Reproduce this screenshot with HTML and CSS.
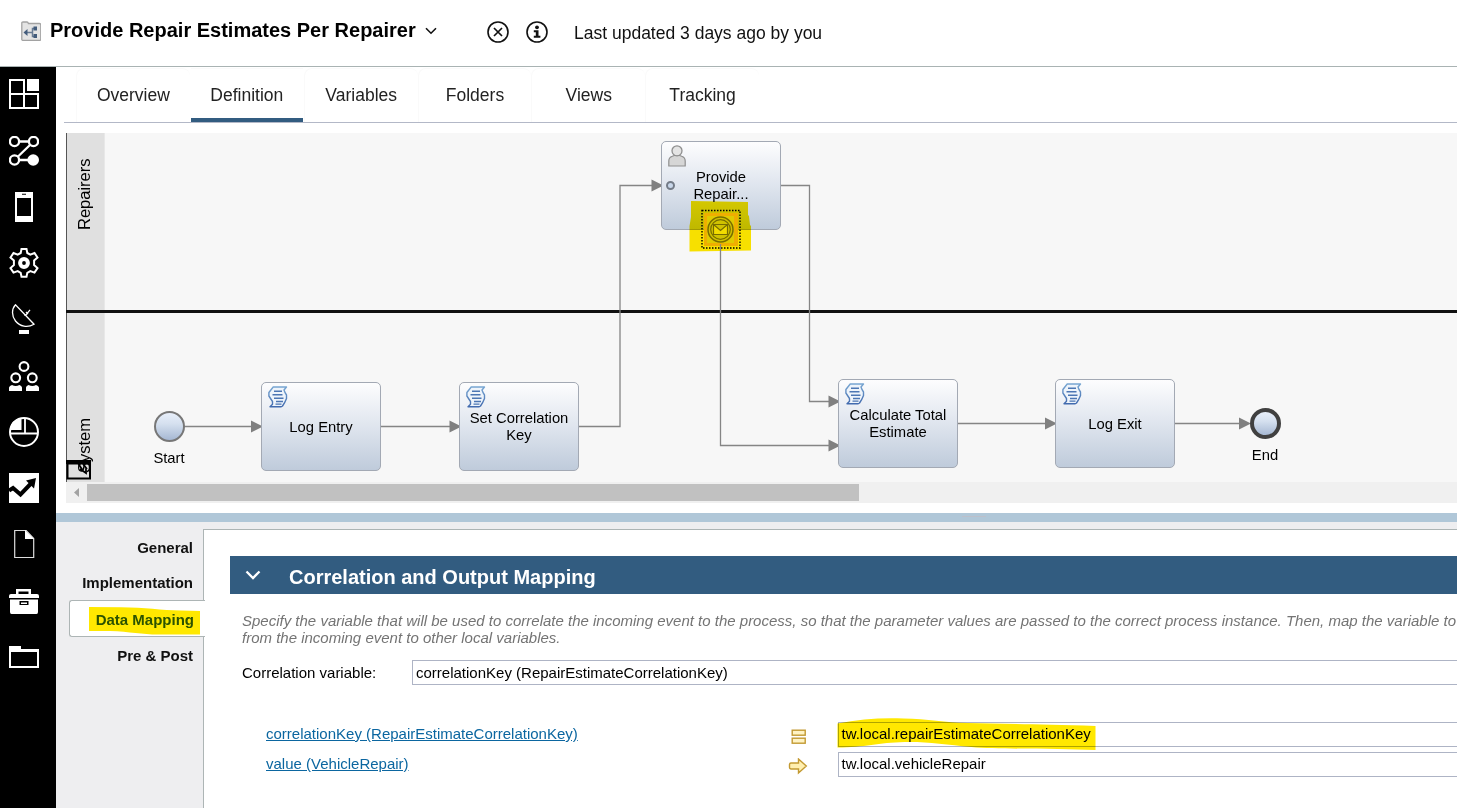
FILE: index.html
```html
<!DOCTYPE html>
<html lang="en">
<head>
<meta charset="utf-8">
<title>Provide Repair Estimates Per Repairer</title>
<link rel="stylesheet" href="styles.css">
</head>
<body>
<header class="topbar">
  <svg class="proc-icon" width="20" height="20" viewBox="0 0 20 20"><path d="M.8 2.200q0-1.200 1.200-1.200h4q1 0 1.400 1.500h11q1.400 0 1.400 1.300v14.400q0 1.200-1.200 1.200H2q-1.200 0-1.200-1.200z" fill="#e4e4e4" stroke="#a2a2a2" stroke-width="1.300"/><path d="M6 11.500h6M15 7.500h-3.500v8H15" fill="none" stroke="#687b94" stroke-width="1.500"/><path d="M2.500 11.500L6.500 8v7z" fill="#435c7c"/><rect x="12.500" y="5.500" width="3.500" height="4" fill="#435c7c"/><rect x="12.500" y="13" width="3.500" height="4" fill="#435c7c"/></svg>
  <h1 class="title">Provide Repair Estimates Per Repairer</h1>
  <svg class="chev" width="12" height="8" viewBox="0 0 12 8"><path d="M1 1.200l5 5 5-5" fill="none" stroke="#111" stroke-width="1.600"/></svg>
  <svg class="ico-close" width="22" height="22" viewBox="0 0 22 22" fill="none" stroke="#111"><circle cx="11" cy="11" r="10" stroke-width="1.600"/><path d="M7 7l8 8M15 7l-8 8" stroke-width="1.700"/></svg>
  <svg class="ico-info" width="22" height="22" viewBox="0 0 22 22"><circle cx="11" cy="11" r="10" fill="none" stroke="#111" stroke-width="1.600"/><circle cx="11" cy="6.300" r="1.900" fill="#111"/><path d="M7.800 9.200h4.700v5.500h1.900v2H7.800v-2h2v-3.500h-2z" fill="#111"/></svg>
  <span class="updated">Last updated 3 days ago by you</span>
</header>
<div class="body">
  <nav class="rail">
    <svg viewBox="0 0 30 30"><g fill="none" stroke="#fff" stroke-width="2"><path d="M1 1h14v28H1zM1 15h28v14H1z"/></g><rect x="18" y="0" width="12" height="12" fill="#fff"/></svg>
    <svg viewBox="0 0 30 30"><g fill="none" stroke="#fff" stroke-width="2.300"><circle cx="5.500" cy="5.500" r="4.600"/><circle cx="24.500" cy="5.500" r="4.600"/><circle cx="5.500" cy="24" r="4.600"/><path d="M10 5.500h10M21.500 8.500L8.500 21M10 24h12"/></g><circle cx="24.200" cy="24" r="5.800" fill="#fff"/></svg>
    <svg viewBox="0 0 30 30"><path fill="#fff" fill-rule="evenodd" d="M6 0h18v30H6zM8 6v18h14V6zM13 2.700h4v-1h-4z"/></svg>
    <svg viewBox="0 0 30 30"><path d="M12.500 1h5l.8 4 3 1.600 4.200-1.600 3 4.500-3.400 3v4.600l3.400 3-3 4.500-4.200-1.500-3 1.700-.8 4h-5l-.8-4-3-1.700-4.200 1.500-3-4.500 3.400-3v-4.600l-3.400-3L4.500 5l4.200 1.600 3-1.600z" fill="none" stroke="#fff" stroke-width="2"/><circle cx="15" cy="15" r="3.900" fill="none" stroke="#fff" stroke-width="4"/></svg>
    <svg viewBox="0 0 30 30"><path d="M6.500.8C2.500 5 2.500 12 6.500 17c4.500 5.500 12 7 18.500 3.200z" fill="none" stroke="#fff" stroke-width="1.300"/><path d="M15 10.800h2l4-5M17 8l2 2" stroke="#fff" stroke-width="1.300" fill="none"/><rect x="10" y="26" width="10" height="4" fill="#fff"/></svg>
    <svg viewBox="0 0 30 30"><g fill="none" stroke="#fff" stroke-width="2.100"><circle cx="15" cy="5.500" r="4.400"/><circle cx="6.700" cy="16.800" r="4.400"/><circle cx="23.300" cy="16.800" r="4.400"/></g><path fill="#fff" d="M0 30v-3.500q.5-2 3-2.500 3.700 2 7.400 0 2.300.5 2.600 2.500V30zM17 30v-3.500q.3-2 2.600-2.500 3.700 2 7.400 0 2.500.5 3 2.500V30z"/></svg>
    <svg viewBox="0 0 30 30"><circle cx="15" cy="15" r="14" fill="none" stroke="#fff" stroke-width="2"/><path d="M12.500 13H1Q2 2 12.500 1z" fill="#fff"/><path d="M1 16.500h28M16 16.500V1" stroke="#fff" stroke-width="1.800"/></svg>
    <svg viewBox="0 0 30 30"><path fill="#fff" d="M0 0h30v30H0z"/><path d="M0 17.500l4-2.500 7.500 6.500L22 10.500" fill="none" stroke="#000" stroke-width="4"/><path d="M17 7.500L27 5l-2 10.500z"/></svg>
    <svg viewBox="0 0 30 30"><path d="M5.700 1.500h11.500l7.500 8v19h-19z" fill="none" stroke="#ddd" stroke-width="1.200"/><path d="M16 1l9 9h-9z" fill="#fff"/></svg>
    <svg viewBox="0 0 30 30"><path fill="#fff" fill-rule="evenodd" d="M7 3h15v5h6q2 0 2 2v2H0v-2q0-2 2-2h5zM9.500 5.500V8h10V5.500zM1 13.500h28V26q0 2-1.500 2h-25Q1 28 1 26zM10.500 15v4h9v-4zM12 16.500h6V18h-6z"/></svg>
    <svg viewBox="0 0 30 30"><path fill="#fff" fill-rule="evenodd" d="M0 4h12v3h18v19H0zM2 10v14h26V10z"/></svg>
  </nav>
  <main class="main">
    <div class="tabs">
      <div class="tab">Overview</div><div class="tab active">Definition</div><div class="tab">Variables</div><div class="tab">Folders</div><div class="tab">Views</div><div class="tab">Tracking</div>
    </div>
    <section class="diagram">
      <div class="lane lane-top"><div class="lane-head"><span>Repairers</span></div></div>
      <div class="lane lane-bottom"><div class="lane-head"><span>System</span></div></div>
      <svg class="wires" width="1391" height="349" viewBox="66 133 1391 349">
        <g fill="none" stroke="#858585" stroke-width="1.300"><path d="M184 426.500h70M380 426.500h72M578 426.500h42V185.500H652M781 185.500h28.500V401.500H830M957 423.500h90M1175 423.500h68"/></g>
        <g fill="#808080"><path d="M251 420.500l12 6-12 6zM449.500 420.500l12 6-12 6zM651.500 179.500l12 6-12 6zM828.500 395.500l12 6-12 6zM828.500 439.500l12 6-12 6zM1045 417.500l12 6-12 6zM1239 417.500l12 6-12 6z"/></g>
      </svg>
      <div class="node n-provide">
        <svg class="user" width="18" height="22" viewBox="0 0 18 22"><path d="M.8 21v-5q0-3.500 3.500-4.700l2-.8h5.400l2 .8q3.500 1.200 3.500 4.700v5z" fill="#d6d6d6" stroke="#8f8f8f" stroke-width="1.200"/><circle cx="9" cy="5.800" r="5" fill="#e4e4e4" stroke="#8f8f8f" stroke-width="1.300"/></svg>
        <i class="port"></i><span>Provide<br>Repair...</span>
      </div>
      <div class="node n-log"><svg class="scroll"><use href="#scroll"/></svg><span>Log Entry</span></div>
      <div class="node n-set"><svg class="scroll"><use href="#scroll"/></svg><span>Set Correlation<br>Key</span></div>
      <div class="node n-calc"><svg class="scroll"><use href="#scroll"/></svg><span>Calculate Total<br>Estimate</span></div>
      <div class="node n-exit"><svg class="scroll"><use href="#scroll"/></svg><span>Log Exit</span></div>
      <div class="event start"><i></i><span>Start</span></div>
      <div class="event end"><i></i><span>End</span></div>
      <svg class="boundary" width="66" height="260" viewBox="688 200 66 260">
        <rect x="704" y="213" width="34" height="33" fill="#efbf35"/><rect x="707" y="216" width="27" height="27" fill="#dfdfb0"/>
        <circle cx="720.500" cy="229.500" r="12.500" fill="#d0d6c8" stroke="#777" stroke-width="1.500"/><circle cx="720.500" cy="229.500" r="9.800" fill="none" stroke="#777" stroke-width="1.200"/>
        <path d="M713.500 224.500h14v10h-14zM713.500 224.500l7 6 7-6" fill="#f2f2f2" stroke="#777" stroke-width="1.200"/>
        <path d="M702 210.500h38v37.500h-38z" fill="none" stroke="#000" stroke-width="1.400" stroke-dasharray="1.500 1.500"/>
      </svg>
      <svg class="mark mark-event" width="66" height="55" viewBox="688 200 66 55"><path d="M691 201l57 1v13l1 1 1 9 1 1v24.500l-61.500 1V226l1.500-9z" fill="#ffe800"/></svg>
      <svg class="drop" width="124" height="216" viewBox="718 244 124 216"><path d="M720.500 244V445.500H830" fill="none" stroke="#858585" stroke-width="1.300"/></svg>
      <svg class="toggle" width="26" height="22" viewBox="0 0 26 22"><path d="M1.500 3.500h22.500V18.500H1.500z" fill="none" stroke="#000" stroke-width="2"/><path d="M0 0h25v4H0z"/><path d="M12.500 4l4 6M17 4l4 5M14 9l6 4v-4.500" fill="none" stroke="#000" stroke-width="1.800"/></svg>
    </section>
    <div class="hscroll"><svg width="21" height="21" viewBox="0 0 21 21"><path d="M13 6v9l-5-4.500z" fill="#a3a3a3"/></svg><div class="thumb"></div></div>
    <div class="splitter"><i></i></div>
    <section class="props">
      <aside class="side">
        <div class="item">General</div><div class="item">Implementation</div>
        <div class="item sel">Data Mapping<svg class="mark mark-side" width="112" height="30" viewBox="88 605 112 30"><path d="M89 607l32 .3c24 0 40 3.200 60 3.200l19 .5v23.500h-42c-16 0-28-2.800-48-3.500H89z" fill="#ffe800"/></svg></div>
        <div class="item">Pre &amp; Post</div>
      </aside>
      <div class="panel">
        <div class="phead"><svg width="16" height="10" viewBox="0 0 16 10"><path d="M1.500 1.500L8 8l6.500-6.500" fill="none" stroke="#fff" stroke-width="2.300"/></svg><h2>Correlation and Output Mapping</h2></div>
        <p class="desc">Specify the variable that will be used to correlate the incoming event to the process, so that the parameter values are passed to the correct process instance. Then, map the variable to<br>from the incoming event to other local variables.</p>
        <div class="row"><label>Correlation variable:</label><div class="field">correlationKey (RepairEstimateCorrelationKey)</div></div>
        <div class="map">
          <div class="mrow"><a>correlationKey (RepairEstimateCorrelationKey)</a><svg class="eq" width="20" height="18" viewBox="0 0 20 18"><g fill="#fff3c4" stroke="#c39a32" stroke-width="1.400"><rect x="4.200" y="2.200" width="13" height="5"/><rect x="4.200" y="10.200" width="13" height="5"/></g></svg><div class="field">tw.local.repairEstimateCorrelationKey<svg class="mark mark-field" width="262" height="34" viewBox="836 716 262 34"><path d="M837.500 723.500c22-4.500 45-6 66-5 24 .5 42 4 64 4.500 36 1 70 1 128 3v24l-38-1c-30-.5-66 0-86-2-26-2.500-44-5.500-67-5-26 .5-40 5.500-67 5.500z" fill="#ffe800"/></svg></div></div>
          <div class="mrow"><a>value (VehicleRepair)</a><svg class="eq" width="20" height="18" viewBox="0 0 20 18"><path d="M3 5h7.500V1L18.300 8l-7.800 7v-4H3q-1.500-.3-1.500-1.500v-3Q1.500 5.300 3 5z" fill="#ffefb0" stroke="#c39a32" stroke-width="1.400"/></svg><div class="field">tw.local.vehicleRepair</div></div>
        </div>
      </div>
    </section>
  </main>
</div>
<svg class="defs" width="0" height="0"><defs>
  <linearGradient id="ink" x1="0" y1="0" x2="0" y2="1"><stop offset="0" stop-color="#78a6d2"/><stop offset="1" stop-color="#416aae"/></linearGradient>
  <symbol id="scroll" viewBox="0 0 20 22"><path d="M5.200 1h13.300l-2.500 3q1 3 2.500 5v3.500q-1.500 4-4 7.500-.5.800-1.500.8H2l2.500-2.500V15.500L.9 10V6.500z" fill="#eef4fb" stroke="url(#ink)" stroke-width="1.400" stroke-linejoin="round"/><g fill="#4c76b4"><path d="M6 4.500h8V6H6zM4.500 8h10v1.500h-10zM6 11.500h9.500V13H6zM8 14.800h7v1.500H8zM7.500 17.500h6v1.300h-6z"/></g></symbol>
</defs></svg>
</body>
</html>
```
FILE: styles.css
```css
* { box-sizing: border-box; }
body { margin: 0; width: 1457px; height: 808px; overflow: hidden; background: #fff; font: 15px/17px "Liberation Sans", Arial, sans-serif; color: #000; display: flex; flex-direction: column; }
h1, h2, p { margin: 0; }
svg { display: block; flex: none; }
.defs { position: absolute; }

.topbar { height: 67px; flex: none; border-bottom: 1px solid #a9b3b3; display: flex; align-items: flex-start; padding-left: 21px; white-space: nowrap; }
.proc-icon { margin-top: 21px; }
.title { font-size: 20px; line-height: 24px; margin: 18px 0 0 9px; width: 366px; }
.chev { margin: 27px 0 0 9px; }
.ico-close { margin: 21px 0 0 50px; }
.ico-info { margin: 21px 0 0 17px; }
.updated { font-size: 17.5px; line-height: 22px; margin: 22px 0 0 26px; color: #111; }

.body { flex: 1; display: flex; min-height: 0; }
.rail { width: 56px; flex: none; background: #000; display: flex; flex-direction: column; align-items: flex-start; gap: 26.250px; padding: 12px 0 0 9px; }
.rail svg { width: 30px; height: 30px; }
.rail svg:first-child { margin-bottom: .3px; }
.main { flex: 1; min-width: 0; display: flex; flex-direction: column; }

.tabs { height: 56px; flex: none; margin-left: 8px; border-bottom: 1px solid #b3b8c7; display: flex; padding: 1px 0 0 12px; }
.tab { width: 113.800px; height: 54px; text-align: center; font-size: 17.5px; line-height: 52px; color: #222; border-radius: 8px 8px 0 0; border-left: 1px solid #fafafa; border-top: 1px solid #fafafa; }
.tab.active { border-bottom: 4px solid #325c80; border-left: 0; width: 112px; margin: 0 1px; border-radius: 0; }

.diagram { position: relative; height: 349px; flex: none; margin: 10px 0 0 10px; overflow: hidden; font-size: 14.800px; display: flex; flex-direction: column; }
.lane { background: #f7f7f7; display: flex; flex: none; }
.lane-top { height: 180px; border-bottom: 3px solid #111; }
.lane-bottom { height: 169px; }
.lane-head { width: 39px; background: #e0e0e0; border-left: 1px solid #555; border-right: 1px solid #e8e8e8; display: flex; }
.lane-head span { writing-mode: vertical-rl; transform: rotate(180deg); font-size: 16.500px; line-height: 18px; margin-left: 8px; white-space: nowrap; }
.lane-top span { margin-top: 25px; height: 73px; text-align: right; }
.lane-bottom span { margin-top: 105px; height: 58px; text-align: right; }
.wires { position: absolute; left: 0; top: 0; }
.node { position: absolute; width: 120px; height: 89px; border: 1.500px solid #a3a9b4; border-radius: 5px; background: linear-gradient(#fdfdfe, #dfe5ee 50%, #bfcbdb); display: flex; align-items: center; justify-content: center; text-align: center; }
.node .scroll { position: absolute; left: 6px; top: 3px; width: 20px; height: 22px; }
.node .user { position: absolute; left: 6px; top: 3px; }
.port { position: absolute; left: 4px; top: 39px; width: 9px; height: 9px; border: 2px solid #737b87; border-radius: 50%; background: #c9d7ea; }
.n-provide { left: 595px; top: 8px; }
.n-log { left: 195px; top: 249px; padding-top: 1px; }
.n-set { left: 393px; top: 249px; }
.n-calc { left: 772px; top: 246px; padding-top: 1px; }
.n-exit { left: 989px; top: 246px; padding-top: 1px; }
.event { position: absolute; display: flex; flex-direction: column; align-items: center; width: 60px; gap: 8px; }
.event i { width: 31px; height: 31px; border-radius: 50%; border: 2px solid #777; background: linear-gradient(#e8effa, #d5e0ef 40%, #a6b8d3); }
.event.end i { border: 4px solid #404040; }
.start { left: 73px; top: 278px; }
.end { left: 1169px; top: 275px; }
.boundary { position: absolute; left: 622px; top: 67px; }
.drop { position: absolute; left: 652px; top: 111px; }
.mark { position: absolute; mix-blend-mode: multiply; }
.mark-event { left: 622px; top: 67px; }
.toggle { position: absolute; left: 0; top: 327px; }

.hscroll { height: 21px; flex: none; margin-left: 10px; background: #f0f0f0; display: flex; align-items: center; }
.thumb { width: 772px; height: 17px; background: #c1c1c1; }
.splitter { height: 9px; flex: none; margin-top: 10px; background: #b0c7d8; display: flex; justify-content: center; padding: 3px 0 0 435px; }
.splitter i { width: 24px; height: 1px; background: #bcc0cb; }

.props { flex: 1; background: #eeeef0; display: flex; padding-top: 7px; min-height: 0; }
.side { width: 147px; flex: none; font-weight: bold; font-size: 15px; color: #111; text-align: right; padding-top: 1px; }
.item { height: 35px; line-height: 35px; padding-right: 10px; }
.item.sel { position: relative; height: 37px; width: 135px; margin: 0 0 0 13px; background: #fff; border: 1px solid #adb5b5; border-right: 0; border-radius: 3px 0 0 3px; line-height: 37px; padding-right: 11px; width: 136px; margin-right: -2px; color: #2b5a00; z-index: 1; }
.item.sel + .item { line-height: 37px; }
.mark-side { left: 18px; top: 4px; }
.panel { flex: 1; min-width: 0; background: #fff; border: solid #adb5b5; border-width: 1px 0 0 1px; overflow: hidden; padding: 26px 0 0 26px; }
.phead { height: 38px; background: #325c80; display: flex; align-items: center; padding-left: 15px; color: #fff; }
.phead h2 { font-size: 20px; line-height: 24px; margin: 4px 0 0 28px; }
.desc { font-style: italic; color: #747474; margin: 18px 0 0 12px; white-space: nowrap; }
.row { display: flex; align-items: center; margin: 14px 0 0 12px; }
.row label { width: 170px; }
.field { flex: 1; height: 25px; border: 1px solid #aeb4c5; border-right: 0; padding-left: 3px; line-height: 24px; white-space: nowrap; position: relative; }
.map { margin: 37px 0 0 36px; display: flex; flex-direction: column; gap: 5px; }
.mrow { display: flex; align-items: center; }
.mrow a { width: 522px; color: #0b66a0; text-decoration: underline; margin-top: -2px; }
.mrow .eq { margin: 4px 30px 0 0; }
.mrow .field { line-height: 22px; padding-left: 2.500px; }
.mark-field { left: -3px; top: -7px; }
```
